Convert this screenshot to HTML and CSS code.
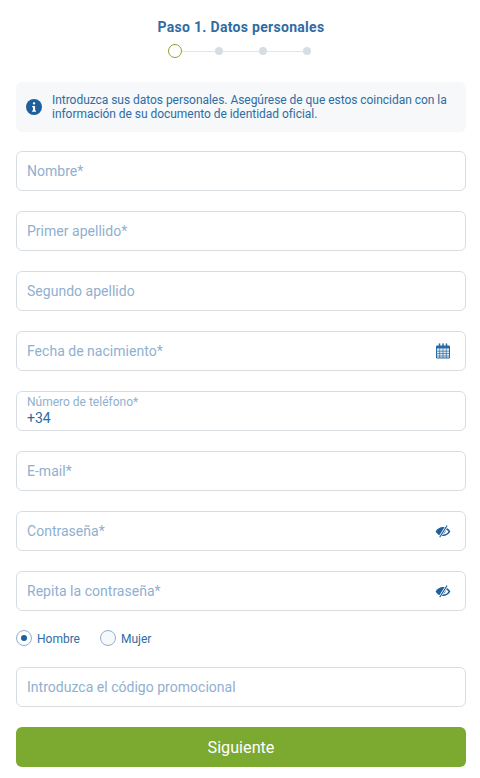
FILE: index.html
```html
<!DOCTYPE html>
<html lang="es">
<head>
<meta charset="utf-8">
<title>Paso 1. Datos personales</title>
<link rel="stylesheet" href="styles.css">
</head>
<body>
<main class="page">
  <h1 class="title">Paso 1. Datos personales</h1>
  <div class="steps">
    <span class="step-current"></span><span class="step-line step-line-first"></span>
    <span class="step-dot"></span><span class="step-line"></span>
    <span class="step-dot"></span><span class="step-line"></span>
    <span class="step-dot"></span>
  </div>
  <div class="notice">
    <svg class="notice-icon" viewBox="0 0 16 16" width="16" height="16"><circle cx="8" cy="8" r="8" fill="#1f5f9c"/><rect x="6.9" y="3.2" width="2.3" height="2.3" rx="1" fill="#fff"/><path d="M6.1 6.9h3v4.6h.9v1.3H6.1v-1.3h.9V8.2h-.9z" fill="#fff"/></svg>
    <p class="notice-text">Introduzca sus datos personales. Asegúrese de que estos coincidan con la información de su documento de identidad oficial.</p>
  </div>
  <form class="fields">
    <div class="field"><span class="placeholder">Nombre*</span></div>
    <div class="field"><span class="placeholder">Primer apellido*</span></div>
    <div class="field"><span class="placeholder">Segundo apellido</span></div>
    <div class="field"><span class="placeholder">Fecha de nacimiento*</span>
      <svg class="field-icon" viewBox="0 0 16 16" width="16" height="16"><path d="M1.500 3h13v12h-13z" fill="#e4eef6" stroke="#2a6ba3" stroke-width="1"/><path d="M1.500 3h13v2.500h-13z" fill="#2a6ba3"/><path d="M4.500 1v3M8 1v3M11.500 1v3" stroke="#2a6ba3" stroke-width="1.500" stroke-linecap="round"/><path d="M1.500 8.200h13M1.500 10.600h13M1.500 13h13M4.700 5.500v9.500M8 5.500v9.500M11.300 5.500v9.500" stroke="#2a6ba3" stroke-width=".7"/></svg>
    </div>
    <div class="field field-filled">
      <span class="floating-label">Número de teléfono*</span>
      <span class="value">+34</span>
    </div>
    <div class="field"><span class="placeholder">E-mail*</span></div>
    <div class="field"><span class="placeholder">Contraseña*</span>
      <svg class="field-icon" viewBox="0 0 16 13" width="16" height="13"><path d="M.6 6.500C2.300 3.700 5 2 8 2c.8 0 1.500.1 2.200.3L5 10.500C3.200 9.800 1.600 8.400.6 6.500z" fill="#1f5f9c"/><path d="M11.900 3.100c1.500.8 2.700 2 3.500 3.400C13.700 9.300 11 11 8 11c-.5 0-1-.1-1.400-.2l.8-1.300h.6c2.500 0 4.400-1.300 5.500-3-.7-1-1.600-1.800-2.600-2.300z" fill="#1f5f9c"/><path d="M10.500 5c.4 1.900-.9 3.500-2.500 3.800z" fill="#1f5f9c"/><path d="M11.800.8 4.600 12.200" stroke="#fff" stroke-width="2.400"/><path d="M11.800 1 5 11.800" stroke="#1f5f9c" stroke-width="1.200" stroke-linecap="round"/></svg>
    </div>
    <div class="field"><span class="placeholder">Repita la contraseña*</span>
      <svg class="field-icon" viewBox="0 0 16 13" width="16" height="13"><path d="M.6 6.500C2.300 3.700 5 2 8 2c.8 0 1.500.1 2.200.3L5 10.500C3.200 9.800 1.600 8.400.6 6.500z" fill="#1f5f9c"/><path d="M11.900 3.100c1.500.8 2.700 2 3.500 3.400C13.700 9.300 11 11 8 11c-.5 0-1-.1-1.400-.2l.8-1.300h.6c2.500 0 4.400-1.300 5.500-3-.7-1-1.600-1.800-2.600-2.300z" fill="#1f5f9c"/><path d="M10.500 5c.4 1.900-.9 3.500-2.500 3.800z" fill="#1f5f9c"/><path d="M11.800.8 4.600 12.200" stroke="#fff" stroke-width="2.400"/><path d="M11.800 1 5 11.800" stroke="#1f5f9c" stroke-width="1.200" stroke-linecap="round"/></svg>
    </div>
    <div class="gender">
      <label class="radio-option"><span class="radio radio-checked"></span><span class="radio-text">Hombre</span></label>
      <label class="radio-option"><span class="radio"></span><span class="radio-text">Mujer</span></label>
    </div>
    <div class="field"><span class="placeholder">Introduzca el código promocional</span></div>
    <button class="submit" type="button">Siguiente</button>
  </form>
</main>
</body>
</html>
```

FILE: styles.css
```css
* { box-sizing: border-box; }
html, body { margin: 0; padding: 0; background: #fff; }
body { font-family: Roboto, "Liberation Sans", sans-serif; color: #2a6ba3; }
.page { width: 480px; height: 778px; padding: 19px 14px 0 16px; overflow: hidden; }
.title { margin: 0; font-size: 14px; line-height: 16px; font-weight: 700; color: #2f6ca3; text-align: center; letter-spacing: .3px; }
.steps { display: flex; align-items: center; width: 143px; margin: 9px 0 0 152px; height: 14px; }
.step-current { width: 14px; height: 14px; border-radius: 50%; border: 1px solid #8aa52e; background: #fff; flex: none; }
.step-dot { width: 8px; height: 8px; border-radius: 50%; background: #d8dde2; flex: none; }
.step-line { flex: none; width: 36px; height: 1px; background: #e3e6e9; }
.step-line-first { width: 33px; }
.notice { display: flex; align-items: center; gap: 10px; height: 50px; margin-top: 24px; padding: 0 10px; background: #f6f8fa; border-radius: 6px; }
.notice-icon { flex: none; }
.notice-text { margin: 0; font-size: 12px; line-height: 14px; letter-spacing: -.04px; color: #2f6ca3; }
.fields { display: flex; flex-direction: column; gap: 20px; margin-top: 19px; }
.field { display: flex; align-items: center; justify-content: space-between; height: 40px; padding: 0 14px 0 10px; border: 1px solid #d8dde2; border-radius: 6px; background: #fff; }
.placeholder { font-size: 14px; letter-spacing: .02px; color: #8fb0cf; }
.field-icon { flex: none; }
.field-filled { flex-direction: column; align-items: flex-start; justify-content: flex-start; padding-top: 4px; }
.floating-label { font-size: 12px; line-height: 13px; color: #8fb0cf; }
.value { font-size: 14px; line-height: 16px; margin-top: 1px; color: #2a6ba3; }
.gender { display: flex; gap: 20px; height: 16px; margin: -1px 0 1px; }
.radio-option { display: flex; align-items: center; gap: 5px; font-size: 12px; color: #2f6ca3; }
.radio-text { padding-top: 1px; }
.radio { position: relative; width: 16px; height: 16px; border-radius: 50%; border: 1px solid #8fb0cf; background: #f6f8fa; }
.radio-checked { background: #fff; }
.radio-checked::after { content: ""; position: absolute; left: 4px; top: 4px; width: 6px; height: 6px; border-radius: 50%; background: #1f5f9c; }
.submit { height: 40px; border: 0; border-radius: 6px; background: #7ca92f; color: #fff; font: 400 16.200px Roboto, "Liberation Sans", sans-serif; }
```
